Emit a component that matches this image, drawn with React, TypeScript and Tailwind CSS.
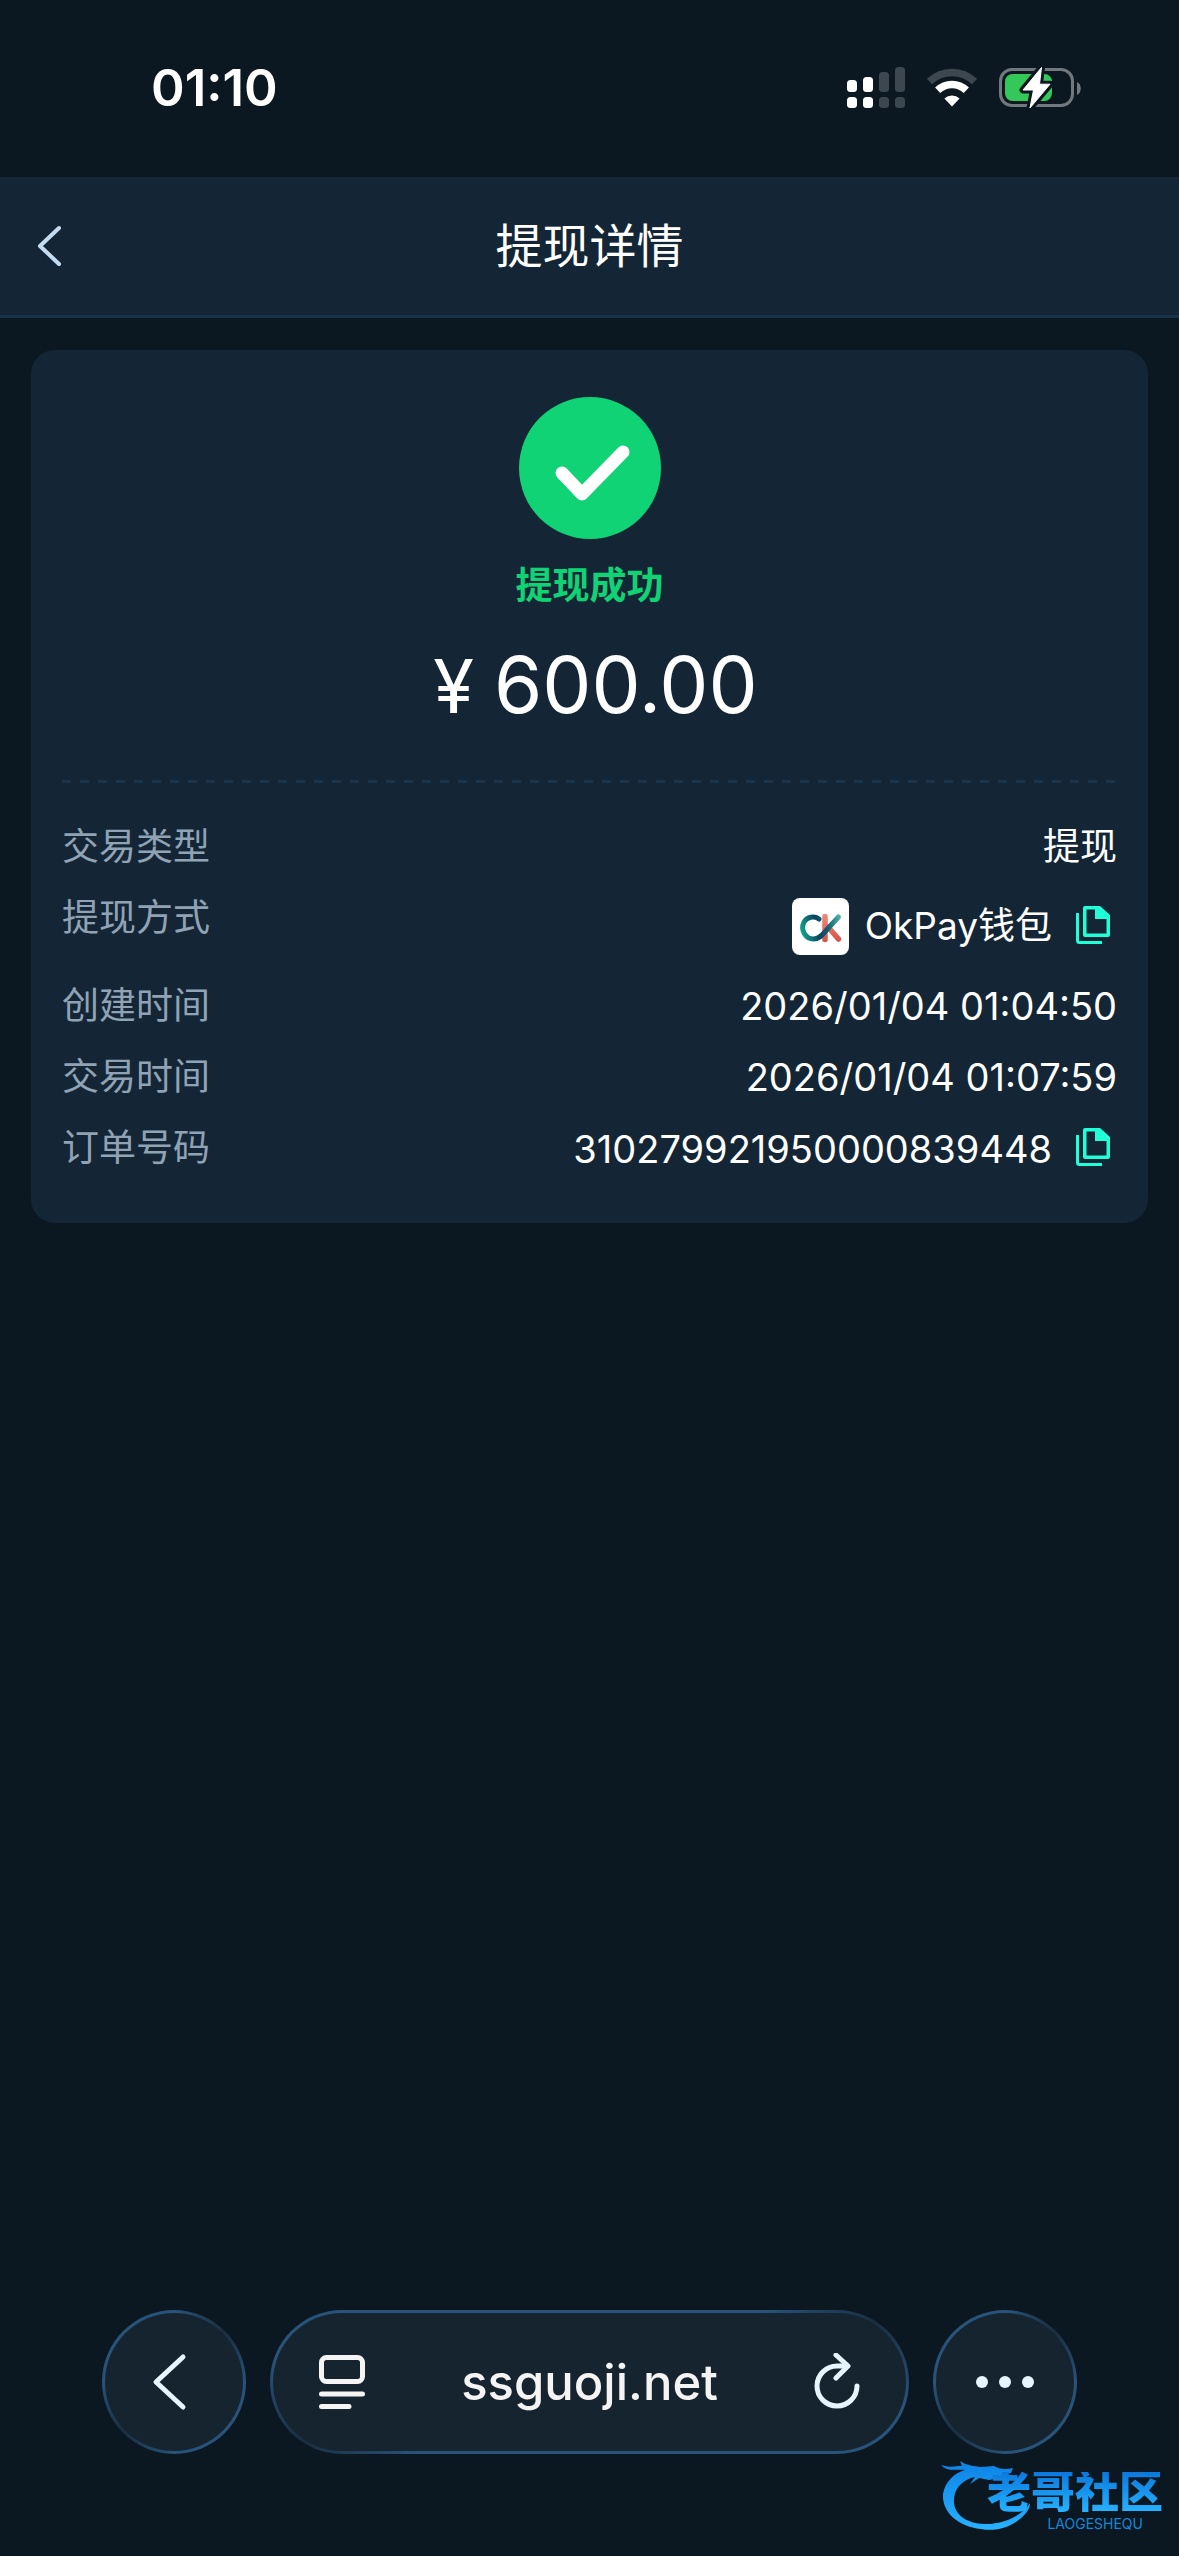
import type { ReactNode } from "react";

const SANS = "font-['Inter','Noto_Sans_CJK_SC',sans-serif]";

function SignalIcon() {
  const bars = [
    { x: 0, y: 13, on: true },
    { x: 16, y: 10, on: true },
    { x: 32, y: 5, on: false },
    { x: 48, y: 0, on: false },
  ];
  return (
    <svg width="58" height="42" viewBox="0 0 58 42" aria-hidden="true">
      {bars.map((b) => (
        <g key={b.x} fill={b.on ? "#fff" : "#3d474f"}>
          <rect x={b.x} y={b.y} width="10" height={25 - b.y} rx="3.5" />
          <rect x={b.x} y="30" width="10" height="11" rx="3.5" />
        </g>
      ))}
    </svg>
  );
}

function WifiIcon() {
  return (
    <svg width="52" height="40" viewBox="0 0 52 40" fill="none" aria-hidden="true">
      <path d="M3.5 13.5A32.5 32.5 0 0 1 48.5 13.5" stroke="#3d474f" strokeWidth="7.5" />
      <path d="M11.7 22.2A20.5 20.5 0 0 1 40.3 22.2" stroke="#fff" strokeWidth="7.5" />
      <path d="M26 38.5 18.4 30.6A11 11 0 0 1 33.6 30.6Z" fill="#fff" />
    </svg>
  );
}

function BatteryIcon() {
  const bolt = "M42.5 0.5 24 23H34.5L31 41 51 17.2H40.5Z";
  return (
    <svg width="84" height="42" viewBox="0 0 84 42" aria-hidden="true">
      <rect x="1.5" y="2.5" width="72" height="36" rx="11.5" fill="none" stroke="#71787e" strokeWidth="3" />
      <path d="M78 15c5 1.5 5 11.5 0 13Z" fill="#71787e" />
      <rect x="6" y="7" width="47" height="27" rx="7.5" fill="#34c759" />
      <path d={bolt} fill="#fff" stroke="#0c1821" strokeWidth="7" strokeLinejoin="round" />
      <path d={bolt} fill="#fff" stroke="#fff" strokeWidth="1" strokeLinejoin="round" />
    </svg>
  );
}

function CopyButton({ label }: { label: string }) {
  return (
    <button type="button" aria-label={label} className="mr-[7px] shrink-0 pb-1">
      <svg width="34" height="38" viewBox="0 0 34 38" aria-hidden="true">
        <path
          fillRule="evenodd"
          fill="#1fffd8"
          d="M9 0H24L34 9V29Q34 31 32 31H9Q7 31 7 29V2Q7 0 9 0ZM10.5 3.5V27.5H30.5V13H19V3.5Z"
        />
        <path d="M1.5 7V34.5Q1.5 36.5 3.5 36.5H26" fill="none" stroke="#1fffd8" strokeWidth="3" />
      </svg>
    </button>
  );
}

function OkLogo() {
  return (
    <svg width="57" height="57" viewBox="0 0 57 57" fill="none" className="shrink-0" role="img" aria-label="OkPay">
      <defs>
        <linearGradient id="okc" x1="8" y1="30" x2="49" y2="20" gradientUnits="userSpaceOnUse">
          <stop offset="0" stopColor="#12a48c" />
          <stop offset="0.4" stopColor="#0b4560" />
          <stop offset="0.65" stopColor="#146073" />
          <stop offset="1" stopColor="#4db9a6" />
        </linearGradient>
        <linearGradient id="okk" x1="0" y1="16" x2="0" y2="44" gradientUnits="userSpaceOnUse">
          <stop offset="0" stopColor="#f08a78" />
          <stop offset="1" stopColor="#d94f48" />
        </linearGradient>
      </defs>
      <rect width="57" height="57" rx="8" fill="#fff" />
      <path d="M33 18.5V41.5M36 29 46.5 41" stroke="url(#okk)" strokeWidth="5.5" strokeLinecap="round" />
      <path
        d="M27 21C22 17.5 15 19 12 24C8 32 13.5 41 21.5 41C28 41 31 36 35 31.5L46.5 19"
        stroke="url(#okc)"
        strokeWidth="5"
        strokeLinecap="round"
      />
    </svg>
  );
}

function Row({ label, children }: { label: string; children: ReactNode }) {
  return (
    <div className="flex items-start justify-between">
      <dt className="text-[37px] leading-[54px] text-[#8fa3b5]">{label}</dt>
      <dd className="flex items-center text-[38px] leading-[54px] text-white">{children}</dd>
    </div>
  );
}

const GLASS =
  "border-[3px] border-transparent [background:linear-gradient(#162430,#162430)_padding-box,conic-gradient(from_0deg,#28547c_0deg,#28547c_68deg,#1a2d3e_78deg,#28547c_94deg,#28547c_248deg,#1a2d3e_258deg,#28547c_274deg,#28547c_360deg)_border-box]";
const GLASS_ROUND =
  "border-[3px] border-transparent [background:linear-gradient(#162430,#162430)_padding-box,conic-gradient(from_0deg,#28547c_0deg,#1a2d3e_45deg,#28547c_90deg,#28547c_180deg,#1a2d3e_225deg,#28547c_270deg,#28547c_360deg)_border-box]";

export default function App() {
  return (
    <div className={`flex min-h-screen flex-col bg-[#0c1821] text-white ${SANS}`}>
      <div className="flex h-[177px] items-center justify-between pr-[96px] pb-[2px] pl-[151px]">
        <time className="text-[51px] leading-none font-semibold">01:10</time>
        <div className="flex items-center gap-[21px]">
          <SignalIcon />
          <WifiIcon />
          <BatteryIcon />
        </div>
      </div>

      <header className="grid h-[141px] grid-cols-[1fr_auto_1fr] items-center border-b-[3px] border-[#1a3248] bg-[#142635] px-[35px]">
        <button type="button" aria-label="返回" className="justify-self-start">
          <svg width="28" height="44" viewBox="0 0 28 44" fill="none" aria-hidden="true">
            <path d="M24 4 5 22 24 40" stroke="#c3dcf2" strokeWidth="4" strokeLinecap="round" strokeLinejoin="round" />
          </svg>
        </button>
        <h1 className="text-[47px] leading-[64px]">提现详情</h1>
      </header>

      <main className="px-[31px] pt-8">
        <section className="rounded-[24px] bg-[#142635] px-[31px] pt-[47px] pb-[46px]">
          <div className="flex flex-col items-center">
            <svg width="142" height="142" viewBox="0 0 142 142" fill="none" aria-hidden="true">
              <circle cx="71" cy="71" r="71" fill="#0fd374" />
              <path d="M43 76 63 97 104 55" stroke="#fff" strokeWidth="13" strokeLinecap="round" strokeLinejoin="round" />
            </svg>
            <p className="mt-5 text-[37px] leading-[54px] font-bold text-[#0fd374]">提现成功</p>
            <p className="mt-6 flex items-baseline gap-5 pl-3 text-[78px] leading-[96px]">
              <span className="text-[74px]">¥</span>
              <span>600.00</span>
            </p>
          </div>
          <div className="mt-[46px] h-[3px] bg-[repeating-linear-gradient(90deg,#1a344b_0_9px,transparent_9px_18px)]" />
          <dl className="mt-[37px] flex flex-col gap-[17px]">
            <Row label="交易类型">
              <span className="text-[37px]">提现</span>
            </Row>
            <Row label="提现方式">
              <span className="flex h-[71px] items-center">
                <OkLogo />
                <span className="mx-4 pb-[2px] text-[37px]">OkPay钱包</span>
                <span className="ml-2 flex">
                  <CopyButton label="复制提现方式" />
                </span>
              </span>
            </Row>
            <Row label="创建时间">2026/01/04 01:04:50</Row>
            <Row label="交易时间">2026/01/04 01:07:59</Row>
            <Row label="订单号码">
              <span className="mr-6 leading-[56px]">310279921950000839448</span>
              <CopyButton label="复制订单号码" />
            </Row>
          </dl>
        </section>
      </main>

      <footer className="relative mt-auto px-[102px] pb-[102px]">
        <nav className="flex gap-6">
          <button type="button" aria-label="后退" className={`flex size-36 shrink-0 items-center justify-center rounded-full ${GLASS_ROUND}`}>
            <svg width="60" height="60" viewBox="0 0 60 60" fill="none" aria-hidden="true">
              <path d="M39 5 12 30 39 55" stroke="#e6f5ff" strokeWidth="5" strokeLinecap="round" strokeLinejoin="round" />
            </svg>
          </button>
          <div className={`flex h-36 flex-1 items-center justify-between rounded-[72px] px-[44px] ${GLASS}`}>
            <button type="button" aria-label="页面设置">
              <svg width="50" height="56" viewBox="0 0 50 56" fill="none" stroke="#f4f4f4" strokeWidth="5" strokeLinecap="round" aria-hidden="true">
                <rect x="4.5" y="3.5" width="41" height="24" rx="5" />
                <path d="M4.5 40H45.5M4.5 52.5H32" />
              </svg>
            </button>
            <a href="#" className="pt-[2px] text-[49px] leading-[64px] font-medium text-[#f4f4f4]">
              ssguoji.net
            </a>
            <button type="button" aria-label="重新加载">
              <svg width="50" height="58" viewBox="0 0 50 58" fill="none" stroke="#e6f5ff" strokeWidth="5" strokeLinecap="round" strokeLinejoin="round" aria-hidden="true">
                <path d="M45 33A20 20 0 1 1 25 13H35" />
                <path d="M24 2 36 13 24 25" />
              </svg>
            </button>
          </div>
          <button type="button" aria-label="更多" className={`flex size-36 shrink-0 items-center justify-center rounded-full ${GLASS_ROUND}`}>
            <svg width="60" height="14" viewBox="0 0 60 14" fill="#e6f5ff" aria-hidden="true">
              <circle cx="7" cy="7" r="6" />
              <circle cx="30" cy="7" r="6" />
              <circle cx="53" cy="7" r="6" />
            </svg>
          </button>
        </nav>

        <div className="absolute right-4 bottom-6 h-[72px] w-[222px]">
          <svg width="94" height="72" viewBox="0 0 94 72" className="absolute top-0 left-0" aria-hidden="true">
            <defs>
              <linearGradient id="dragon" x1="0" y1="0" x2="0" y2="1">
                <stop offset="0" stopColor="#0d82e6" />
                <stop offset="1" stopColor="#27b2ff" />
              </linearGradient>
            </defs>
            <path
              fill="url(#dragon)"
              d="M0 5C8 8 14 6 21 6L19 1C27 6 33 6 40 7L53 6C58 9 64 10 72 8L70 13 62 14 71 17 68 20 57 18 48 20 38 18 29 24 34 17C20 20 12 30 13 43C15 59 32 65 50 64C68 62 82 54 89 43C89 48 87 50 85 53C73 67 56 72 40 69C16 66 1 52 2 34C4 22 13 13 24 10C15 9 6 12 0 5Z"
            />
          </svg>
          <div className="absolute top-3 right-0 bg-gradient-to-b from-[#0c78dc] to-[#27b2ff] bg-clip-text text-[44px] leading-[40px] font-black text-transparent">
            老哥社区
          </div>
          <div className="absolute right-5 bottom-0 text-[14px] leading-4 text-[#1686d8]">LAOGESHEQU</div>
        </div>
      </footer>
    </div>
  );
}
